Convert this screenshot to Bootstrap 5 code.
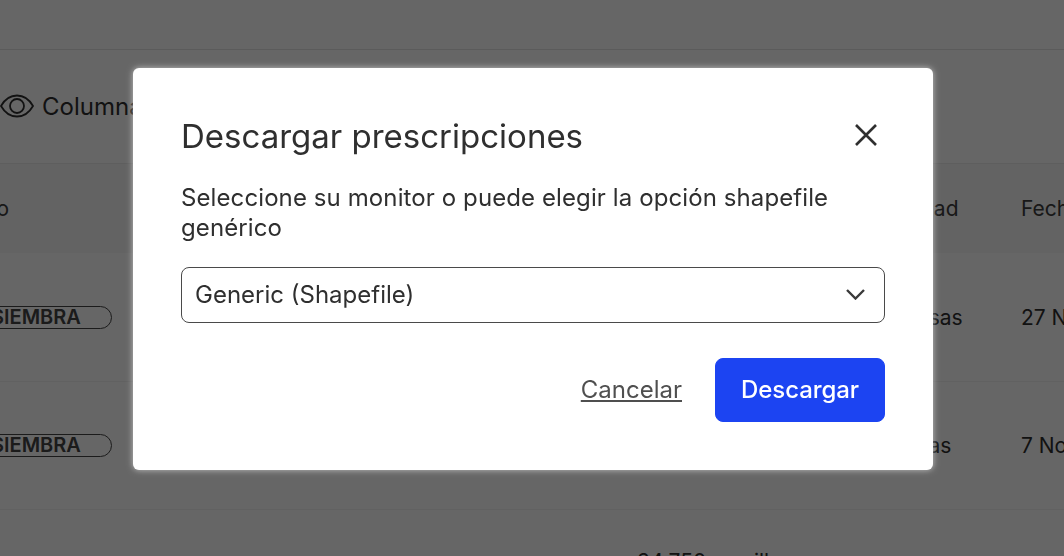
<!DOCTYPE html>
<html lang="es">
<head>
  <meta charset="UTF-8">
  <title>Descargar prescripciones</title>
  <meta name="viewport" content="width=device-width, initial-scale=1">
  <link rel="stylesheet" href="https://cdn.jsdelivr.net/npm/bootstrap@5.3.0/dist/css/bootstrap.min.css">
  <style>
    html, body { height: 100%; overflow: hidden; }
    body { font-family: Inter, "Liberation Sans", sans-serif; background-color: #fff; color: #2f2f2f; }
    /* page behind the modal, scrolled sideways */
    .top-strip { height: 50px; border-bottom: 1px solid #e4e4e4; }
    .tool-strip { height: 114px; font-size: 24px; color: #2f2f2f; border-bottom: 1px solid #ececec; }
    .tool-strip svg { flex: none; margin-bottom: 2px; }
    .sheet { display: grid; grid-template-columns: 147px 525px 228px 156px 200px; width: 1256px; margin-left: -35px; }
    .sheet > div { display: flex; align-items: center; font-size: 21px; white-space: nowrap; border-bottom: 1px solid #f2f2f2; }
    .sheet .head-cell { height: 89px; background-color: #f7f7f7; color: #3c3c3c; border-bottom: 0; }
    .sheet .body-cell { height: 128.500px; padding-top: 1px; }
    .sheet .num-cell { align-items: flex-start; padding-top: 36px; }
    .tag-pill { width: 130px; height: 23px; margin-left: 17px; border: 1.500px solid #444; border-radius: 12px; font-size: 20px; font-weight: 600; line-height: 20px; padding-left: 8px; color: #444; }
    /* modal */
    .modal-backdrop.show { opacity: .6; }
    .export-dialog { max-width: 800px; margin: 68px 0 0 133px; }
    .export-dialog .modal-content { height: 402px; border: 0; border-radius: 6px; padding: 48px; box-shadow: 0 0 6px rgba(255,255,255,.6); }
    .export-title { font-size: 33px; line-height: 40px; font-weight: 400; color: #2f2f2f; margin: 0; }
    .export-close { width: 24px; height: 24px; margin-top: 7px; margin-right: 7px; background: none; border: 0; padding: 0; }
    .export-text { font-size: 24px; line-height: 30px; letter-spacing: .1px; color: #2f2f2f; margin: 27px 0 24px; }
    .export-select { height: 56px; font-size: 24px; color: #2f2f2f; border: 1px solid #4a4a4a; border-radius: 8px; padding: 0 13px; background-image: none; }
    .select-wrap svg { right: 20px; top: 22px; pointer-events: none; }
    .export-cancel { font-size: 24px; color: #4f4f4f; margin-right: 17px; }
    .export-go { width: 170px; height: 64px; background-color: #1c44f2; border-color: #1c44f2; border-radius: 8px; font-size: 24px; font-weight: 500; letter-spacing: -.1px; }
  </style>
</head>
<body>
  <div class="top-strip"></div>
  <div class="tool-strip d-flex align-items-center gap-2">
    <svg width="34" height="24" viewBox="0 0 34 24" fill="none" stroke="#2f2f2f" stroke-width="1.800"><path d="M1 12C5 5 11 1.500 17 1.500S29 5 33 12C29 19 23 22.500 17 22.500S5 19 1 12Z"/><circle cx="17" cy="12" r="7"/></svg>
    <span>Columnas</span>
  </div>
  <div class="sheet">
    <div class="head-cell">Tipo</div><div class="head-cell"></div><div class="head-cell"></div><div class="head-cell">Densidad</div><div class="head-cell">Fecha</div>
    <div class="body-cell"><span class="tag-pill">SIEMBRA</span></div><div class="body-cell"></div><div class="body-cell"></div><div class="body-cell">Empresas</div><div class="body-cell">27 Nov 2023</div>
    <div class="body-cell"><span class="tag-pill">SIEMBRA</span></div><div class="body-cell"></div><div class="body-cell"></div><div class="body-cell">Cabezas</div><div class="body-cell">7 Nov 2023</div>
    <div class="body-cell"></div><div class="body-cell"></div><div class="body-cell num-cell">34.750 semillas</div><div class="body-cell"></div><div class="body-cell"></div>
  </div>

  <div class="modal-backdrop fade show"></div>
  <div class="modal fade show d-block" tabindex="-1" role="dialog">
    <div class="modal-dialog export-dialog">
      <div class="modal-content">
        <div class="d-flex justify-content-between align-items-start">
          <h5 class="export-title">Descargar prescripciones</h5>
          <button type="button" class="export-close" aria-label="Close">
            <svg class="d-block" width="24" height="24" viewBox="0 0 24 24" fill="none" stroke="#2f2f2f" stroke-width="2.600"><path d="M2 2 22 22M22 2 2 22"/></svg>
          </button>
        </div>
        <p class="export-text">Seleccione su monitor o puede elegir la opción shapefile genérico</p>
        <div class="select-wrap position-relative">
          <select class="form-select export-select"><option>Generic (Shapefile)</option></select>
          <svg class="position-absolute" width="19" height="11" viewBox="0 0 19 11" fill="none" stroke="#3a3a3a" stroke-width="2.400"><path d="M1 1 9.500 9.500 18 1"/></svg>
        </div>
        <div class="d-flex justify-content-end align-items-center mt-auto">
          <a href="#" class="export-cancel">Cancelar</a>
          <button type="button" class="btn btn-primary export-go ms-3">Descargar</button>
        </div>
      </div>
    </div>
  </div>
  <script src="https://cdn.jsdelivr.net/npm/bootstrap@5.3.0/dist/js/bootstrap.bundle.min.js"></script>
</body>
</html>
